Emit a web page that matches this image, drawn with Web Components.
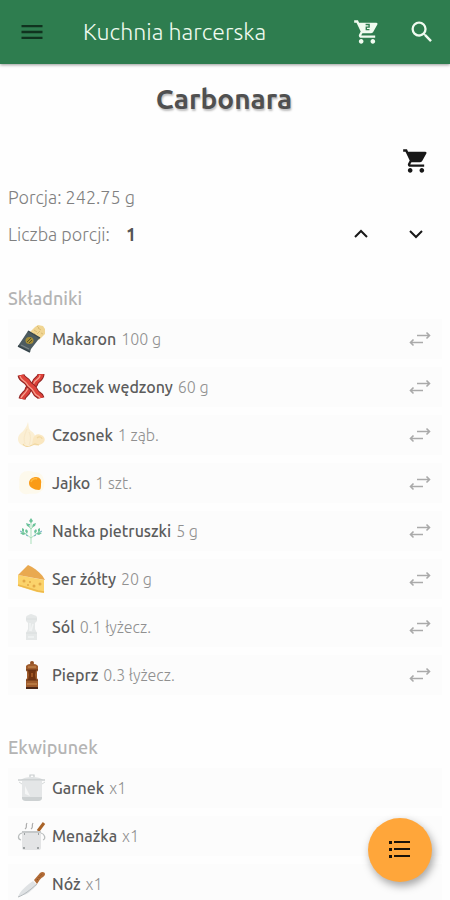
<!DOCTYPE html>
<html lang="pl">
<head>
<meta charset="utf-8">
<meta name="viewport" content="width=device-width, initial-scale=1">
<title>Kuchnia harcerska</title>
<style>
    html, body{
        margin: 0;
        min-height: 100%;
        background: #fefefe;
        scrollbar-width: none;
    }
    body{
        font-family: Ubuntu, "Noto Sans", "Open Sans", sans-serif;
        color: #5c5c5c;
    }
</style>
</head>
<body>
<kitchen-app>
    <app-bar slot="bar">Kuchnia harcerska</app-bar>
    <recipe-head portion="242.75 g" count="1">Carbonara</recipe-head>
    <item-list label="Składniki">
        <item-row icon="pasta" amount="100 g" swap>Makaron</item-row>
        <item-row icon="bacon" amount="60 g" swap>Boczek wędzony</item-row>
        <item-row icon="garlic" amount="1 ząb." swap>Czosnek</item-row>
        <item-row icon="egg" amount="1 szt." swap>Jajko</item-row>
        <item-row icon="parsley" amount="5 g" swap>Natka pietruszki</item-row>
        <item-row icon="cheese" amount="20 g" swap>Ser żółty</item-row>
        <item-row icon="salt" amount="0.1 łyżecz." swap>Sól</item-row>
        <item-row icon="pepper" amount="0.3 łyżecz." swap>Pieprz</item-row>
    </item-list>
    <item-list label="Ekwipunek">
        <item-row icon="pot" amount="x1">Garnek</item-row>
        <item-row icon="mess" amount="x1">Menażka</item-row>
        <item-row icon="knife" amount="x1">Nóż</item-row>
    </item-list>
    <fab-button slot="fab" label="Lista kroków"></fab-button>
</kitchen-app>

<script>
// material icons use a 24 grid, food drawings a 28 grid
const CART = 'M7 18c-1.1 0-1.99.9-1.99 2S5.9 22 7 22s2-.9 2-2-.9-2-2-2zM1 2v2h2l3.6 7.59-1.35 2.45c-.16.28-.25.61-.25.96 0 1.1.9 2 2 2h12v-2H7.42c-.14 0-.25-.11-.25-.25l.03-.12.9-1.63h7.45c.75 0 1.41-.41 1.75-1.03l3.58-6.49A1 1 0 0 0 20 4H5.21l-.94-2H1zm16 16c-1.1 0-1.99.9-1.99 2s.89 2 1.99 2 2-.9 2-2-.9-2-2-2z';

const ICONS = {
    menu: [24, '<path d="M3 18h18v-2H3v2zm0-5h18v-2H3v2zm0-7v2h18V6H3z"/>'],
    cart: [24, `<path d="${CART}"/>`],
    cartCount: [24, `<path d="${CART}"/><path d="M10.800 5.600h3v2.200h-2.400v2.200h2.700" fill="none" stroke="#2e7d4f" stroke-width="1.200"/>`],
    search: [24, '<path d="M15.5 14h-.79l-.28-.27A6.47 6.47 0 0 0 16 9.5 6.5 6.5 0 1 0 9.5 16c1.61 0 3.09-.59 4.23-1.57l.27.28v.79l5 4.99L20.49 19l-4.99-5zm-6 0C7.01 14 5 11.99 5 9.5S7.01 5 9.5 5 14 7.01 14 9.5 11.99 14 9.5 14z"/>'],
    up: [28, '<path d="M8 17l6-6 6 6" fill="none" stroke="currentColor" stroke-width="2"/>'],
    down: [28, '<path d="M8 11l6 6 6-6" fill="none" stroke="currentColor" stroke-width="2"/>'],
    swap: [28, '<path d="M11 10.500h12M20.500 7.500l3 3-3 3M17 17.500H5M7.500 14.500l-3 3 3 3" fill="none" stroke="currentColor" stroke-width="1.600"/>'],
    list: [28, '<path d="M3 5h3v3H3zM3 12h3v3H3zM3 19h3v3H3zM8 5h16v2H8zM8 12h16v2H8zM8 19h16v2H8z"/>'],
    pasta: [28, `
        <path d="M13 7l5-5 3-2 5 1 2 3v5l-6 6z" fill="#f0d592"/>
        <path d="M17 5l3 2M21 3l3 2M20 9l3-3M24 8l2 1M17 8l2 2M20 1l2 2" stroke="#dbbb74"/>
        <path d="M11 6l12 7-2 2-7 9-1 3L1 21l2-3 6-9z" fill="#4d5b5f"/>
        <path d="M11 6l12 7M1 21l12 6" stroke="#36444a" stroke-width="1.400"/>
        <ellipse cx="12.500" cy="15.500" rx="4" ry="3.500" fill="#a58d35"/>
        <path d="M10 17l4-4M12 18l3-3" stroke="#5c5426"/>
        <path d="M4 20l8 4" stroke="#7b8486" stroke-width="1.200"/>`],
    bacon: [28, `
        <g fill="none" stroke-linejoin="round">
            <path d="M24 1c0 5-5 5-6 9s-6 3-7 7-5 4-6 9" stroke="#8e2524" stroke-width="7"/>
            <path d="M24 1c0 5-5 5-6 9s-6 3-7 7-5 4-6 9" stroke="#dc4038" stroke-width="5"/>
            <path d="M23 2c0 5-5 4-6 8s-5 3-7 7-4 4-6 8" stroke="#f3a492" stroke-width="1.200"/>
            <path d="M4 2c1 5 5 4 7 8s5 3 7 8 5 3 6 7" stroke="#8e2524" stroke-width="7"/>
            <path d="M4 2c1 5 5 4 7 8s5 3 7 8 5 3 6 7" stroke="#e0443b" stroke-width="5"/>
            <path d="M3 3c1 5 5 4 7 8s5 3 7 8 5 3 6 6" stroke="#f3a492" stroke-width="1.200"/>
        </g>`],
    garlic: [28, `
        <path d="M11 1c1 4 0 6 3 9 3 2 5 4 4 9-1 5-5 6-9 6-5 0-8-3-8-7 0-5 4-6 6-9s3-4 4-8z" fill="#fbefd4"/>
        <path d="M16 18c1-4 5-6 8-4 4 1 5 6 2 8-3 3-9 3-11 1z" fill="#fae7c0"/>
        <path d="M6 23c1 2 4 3 7 2l5-2 4 1M20 17c2-2 5-1 5 1" fill="none" stroke="#f1d8a2" stroke-width="1.200"/>
        <path d="M10 8c-2 5-4 8-2 15M12 11c2 4 2 8 0 13" fill="none" stroke="#f8e7c6"/>`],
    egg: [28, `
        <path d="M4 5c4-4 9-3 13-2 6 0 9 3 10 8s0 10-4 12c-5 3-8 1-12 2-6 1-9-3-9-7 1-4-1-9 2-13z" fill="#fdf9ec"/>
        <path d="M12 14c0-4 4-6 7-6 4 0 6 3 5 7 0 3 0 6-2 6-3 0-5-1-7-2-2-1-3-3-3-5z" fill="#fa9b17"/>
        <path d="M14 13c1-3 4-4 6-3" fill="none" stroke="#ffb83c" stroke-width="1.500"/>`],
    parsley: [28, `
        <path d="M14 27V5M14 21L5 14M14 21l9-7M14 12l-4-4M14 12l4-4" fill="none" stroke="#a9dfba"/>
        <g fill="#6cc39a">
            <path d="M14 1l2 3-2 2-2-2zM9 6l3 1 1 3-3-1zM19 6l-3 1-1 3 3-1z"/>
            <path d="M5 11l2 1v3l-2-1zM3 16l3-1 3 2-3 1zM9 12l2 2-1 3-2-3z"/>
            <path d="M23 11l-2 1v3l2-1zM25 16l-3-1-3 2 3 1zM19 12l-2 2 1 3 2-3z"/>
        </g>
        <path d="M3 14l2 1M9 18l2 1M25 14l-2 1M19 18l-2 1M12 7l1 1" stroke="#70a9c4"/>`],
    cheese: [28, `
        <path d="M1 10l26 5v13l-7-1-19-6z" fill="#fbd36b"/>
        <path d="M1 10l7-7 3-3 4 2c5 3 10 7 13 13z" fill="#e9a950"/>
        <path d="M1 20l20 6 6 1" fill="none" stroke="#eeb94c" stroke-width="1.500"/>
        <g fill="#e3a847"><circle cx="7" cy="16" r="1.500"/><circle cx="13" cy="17" r="1"/><circle cx="17" cy="21" r="1.500"/><circle cx="23" cy="19" r="1.500"/><circle cx="11" cy="20" r="1"/></g>`],
    salt: [28, `
        <path d="M9 4c1-2 3-2 5-3 2 1 5 1 6 3v4l-2 2v6l2 4v7H9v-7l2-4v-6L9 8z" fill="#e5e8e8"/>
        <path d="M9 6h11M9 20h11" stroke="#dadede"/>
        <path d="M13 10v8M16 11l-2 7M11 24h6" stroke="#f1f3f3" stroke-width="1.500"/>`],
    pepper: [28, `
        <circle cx="15" cy="2" r="2" fill="#935024"/>
        <path d="M9 5c2-3 10-3 12 0v4l-1 2v6l1 2v9H9v-9l1-2v-6L9 9z" fill="#9f5c2d"/>
        <path d="M11 9h8l-1 5 1 5h-8l1-5z" fill="#71330f"/>
        <path d="M9 9h12M9 19h12" stroke="#643014"/>
        <path d="M11 6h8M10 23h10" stroke="#c0814a" stroke-width="1.500"/>
        <path d="M9 27h12" stroke="#4b2819" stroke-width="2"/>
        <path d="M15 12v4" stroke="#ad602a" stroke-width="1.500"/>`],
    pot: [28, `
        <path d="M13 3V1h4v2" fill="none" stroke="#c7cccd" stroke-width="1.200"/>
        <path d="M4 6c3-4 19-4 22 0z" fill="#dfe2e3"/>
        <path d="M5 7h20v17c0 2-2 3-4 3H9c-2 0-4-1-4-3z" fill="#e4e6e7"/>
        <path d="M1 6h27" stroke="#c5cacb" stroke-width="1.300"/>
        <path d="M5 23h20v1c0 2-2 3-4 3H9c-2 0-4-1-4-3z" fill="#cdd1d2"/>
        <path d="M5 10l-3-2M25 10l3-2" stroke="#d6dada"/>
        <path d="M8 12v8l5 2z" fill="#f5f6f6"/>`],
    mess: [28, `
        <path d="M21 9l6-8" stroke="#a96328" stroke-width="3"/>
        <path d="M8 7c3-2 0-3 2-6M14 7c3-2 0-3 2-6" fill="none" stroke="#aaa" stroke-width="1.200"/>
        <path d="M5 9h19v17c0 1-1 2-2 2H7c-1 0-2-1-2-2z" fill="#e3e4e5"/>
        <path d="M5 10h19" stroke="#b5b9ba" stroke-width="1.300"/>
        <path d="M5 11c-4 1-5 6-1 7M24 11c4 1 5 6 2 7" fill="none" stroke="#babebe" stroke-width="1.200"/>
        <path d="M6 26h2M20 26h2M7 12h1M21 12h1" stroke="#898d8f" stroke-width="1.500"/>`],
    knife: [28, `
        <path d="M1 27c1-4 6-10 15-16l4 4c-5 5-10 10-14 10z" fill="#dfe2e4"/>
        <path d="M1 27c6-2 12-7 19-13" fill="none" stroke="#b4babd"/>
        <path d="M17 10l6-7c2-2 5-1 5 1 0 3-4 3-6 7l-2 3z" fill="#b16b36"/>
        <path d="M20 10l5-6" stroke="#7d431e" stroke-dasharray="1 2"/>`]
};

class KitchenIcon extends HTMLElement{
    constructor(){
        super();
        this.shadow = this.attachShadow({ mode: "open" });
    }

    static get observedAttributes(){
        return ["name"];
    }

    attributeChangedCallback(){
        const [grid, shape] = ICONS[this.getAttribute("name")];
        this.shadow.innerHTML = `
            <style>
                :host{ display: block; flex: none; width: 28px; height: 28px; }
                svg{ display: block; width: 100%; height: 100%; overflow: visible; }
            </style>
            <svg viewBox="0 0 ${grid} ${grid}" fill="currentColor" aria-hidden="true">${shape}</svg>`;
    }
}

// look shared by every icon button
const BUTTON_CSS = `
    button{
        display: flex;
        align-items: center;
        justify-content: center;
        flex: none;
        width: 48px;
        height: 40px;
        padding: 0;
        border: 0;
        background: none;
        color: inherit;
        font: inherit;
        cursor: pointer;
    }`;

class AppBar extends HTMLElement{
    connectedCallback(){
        this.attachShadow({ mode: "open" }).innerHTML = `
            <style>
                :host{ display: block; position: sticky; top: 0; z-index: 1; }
                header{
                    display: flex;
                    align-items: center;
                    height: 64px;
                    padding: 0 4px 0 8px;
                    background: #2e7d4f;
                    color: #f0fbf0;
                    box-shadow: 0 1px 3px rgba(0, 0, 0, .4);
                }
                .title{ flex: 1; padding-left: 27px; font-size: 23px; font-weight: 300; line-height: 32px; }
                .menu{ color: #10331f; }
                .right{ display: flex; gap: 7px; }
                ${BUTTON_CSS}
            </style>
            <header>
                <button class="menu" aria-label="Menu"><kitchen-icon name="menu"></kitchen-icon></button>
                <div class="title"><slot></slot></div>
                <div class="right">
                    <button aria-label="Koszyk"><kitchen-icon name="cartCount"></kitchen-icon></button>
                    <button aria-label="Szukaj"><kitchen-icon name="search"></kitchen-icon></button>
                </div>
            </header>`;
    }
}

class RecipeHead extends HTMLElement{
    connectedCallback(){
        this.attachShadow({ mode: "open" }).innerHTML = `
            <style>
                :host{ display: block; padding: 17px 2px 0 0; color: #808080; font-size: 18px; font-weight: 300; line-height: 24px; }
                h1{
                    margin: 0;
                    color: #505050;
                    font-size: 28px;
                    font-weight: 700;
                    line-height: 36px;
                    text-align: center;
                    text-shadow: 1px 2px 2px rgba(0, 0, 0, .25);
                }
                .line{ display: flex; align-items: center; height: 40px; }
                .cart{ justify-content: flex-end; margin-top: 24px; color: #181818; }
                .portion{ height: 32px; }
                .count{ gap: 16px; padding-top: 1px; }
                output{ flex: 1; color: #555; font-weight: 700; }
                .steps{ display: flex; gap: 7px; color: #181818; }
                ${BUTTON_CSS}
            </style>
            <h1><slot></slot></h1>
            <div class="line cart"><button aria-label="Dodaj do koszyka"><kitchen-icon name="cart"></kitchen-icon></button></div>
            <div class="line portion">Porcja: ${this.getAttribute("portion")}</div>
            <div class="line count">
                <label for="count">Liczba porcji:</label>
                <output id="count">${this.getAttribute("count")}</output>
                <div class="steps">
                    <button class="more" aria-label="Więcej porcji"><kitchen-icon name="up"></kitchen-icon></button>
                    <button class="less" aria-label="Mniej porcji"><kitchen-icon name="down"></kitchen-icon></button>
                </div>
            </div>`;
        const output = this.shadowRoot.querySelector("output");
        this.shadowRoot.querySelector(".more").onclick = () => output.value = +output.value + 1;
        this.shadowRoot.querySelector(".less").onclick = () => output.value = Math.max(1, output.value - 1);
    }
}

class ItemList extends HTMLElement{
    connectedCallback(){
        this.attachShadow({ mode: "open" }).innerHTML = `
            <style>
                :host{ display: block; padding: 32px 0 8px; }
                h2{ margin: 0 0 9px; color: #b4b4b4; font-size: 18px; font-weight: 500; line-height: 24px; }
                .rows{ display: flex; flex-direction: column; gap: 8px; }
            </style>
            <h2>${this.getAttribute("label")}</h2>
            <div class="rows" role="list"><slot></slot></div>`;
    }
}

class ItemRow extends HTMLElement{
    connectedCallback(){
        const swap = this.hasAttribute("swap")
            ? '<button aria-label="Zamień"><kitchen-icon name="swap"></kitchen-icon></button>'
            : "";
        this.setAttribute("role", "listitem");
        this.attachShadow({ mode: "open" }).innerHTML = `
            <style>
                :host{
                    display: flex;
                    align-items: center;
                    height: 40px;
                    padding-left: 9px;
                    background: #fcfcfc;
                    font-size: 16px;
                    line-height: 24px;
                }
                .text{ display: flex; flex: 1; gap: 5px; padding-left: 7px; }
                .name{ font-weight: 500; }
                .amount{ color: #909090; font-weight: 300; }
                ${BUTTON_CSS}
                button{ width: 44px; color: #aaa; }
            </style>
            <kitchen-icon name="${this.getAttribute("icon")}"></kitchen-icon>
            <div class="text"><span class="name"><slot></slot></span><span class="amount">${this.getAttribute("amount")}</span></div>
            ${swap}`;
    }
}

class FabButton extends HTMLElement{
    connectedCallback(){
        this.attachShadow({ mode: "open" }).innerHTML = `
            <style>
                :host{ position: fixed; right: 18px; bottom: 18px; z-index: 2; }
                ${BUTTON_CSS}
                button{
                    width: 64px;
                    height: 64px;
                    border-radius: 50%;
                    background: #ffa63a;
                    color: #1a1208;
                    box-shadow: 2px 4px 8px rgba(0, 0, 0, .35);
                }
            </style>
            <button aria-label="${this.getAttribute("label")}"><kitchen-icon name="list"></kitchen-icon></button>`;
    }
}

class KitchenApp extends HTMLElement{
    connectedCallback(){
        this.attachShadow({ mode: "open" }).innerHTML = `
            <style>
                :host{ display: block; }
                main{ padding: 0 8px; }
            </style>
            <slot name="bar"></slot>
            <main><slot></slot></main>
            <slot name="fab"></slot>`;
    }
}

window.customElements.define("kitchen-icon", KitchenIcon);
window.customElements.define("app-bar", AppBar);
window.customElements.define("recipe-head", RecipeHead);
window.customElements.define("item-list", ItemList);
window.customElements.define("item-row", ItemRow);
window.customElements.define("fab-button", FabButton);
window.customElements.define("kitchen-app", KitchenApp);
</script>
</body>
</html>
